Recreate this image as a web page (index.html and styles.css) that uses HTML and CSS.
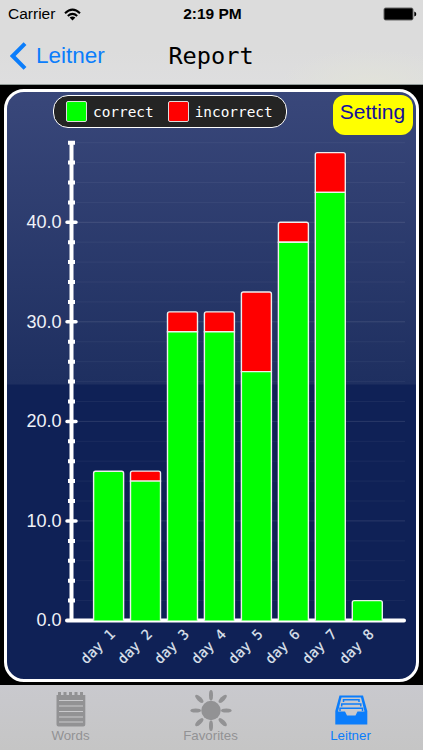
FILE: index.html
```html
<!DOCTYPE html>
<html lang="en">
	<head>
		<meta charset="utf-8" />
		<meta name="viewport" content="width=device-width, initial-scale=1" />
		<title>Report</title>
		<link rel="stylesheet" href="styles.css">
	</head>
	<body>
		<header>
			<div class="status">
				<span class="carrier">Carrier
					<svg width="17" height="13" viewBox="0 0 17 13"><g fill="none" stroke="#000" stroke-width="2"><path d="M1 5.2Q8.5-2 16 5.2" /><path d="M3.8 8Q8.5 3.8 13.2 8" /></g><path d="M5.6 9.6Q8.5 7.2 11.4 9.6L8.5 12.4Z" /></svg>
				</span>
				<span class="time">2:19 PM</span>
				<svg class="battery" width="34" height="14" viewBox="0 0 34 14"><rect x="1" y="1" width="29" height="12" rx="1.6" fill="#000" stroke="#666" stroke-width="1" /><path d="M31.3 4.5Q33.3 5 33.3 7T31.3 9.5Z" /></svg>
			</div>
			<div class="nav">
				<a class="back"><svg width="17" height="28" viewBox="0 0 17 28"><path d="M15 1.7L2.7 14L15 26.3" fill="none" stroke="#0b7dfb" stroke-width="4" /></svg>Leitner</a>
				<h1>Report</h1>
			</div>
		</header>

		<main>
			<div class="card">
				<div class="top">
					<div class="legend">
						<i class="correct"></i><span>correct</span>
						<i class="incorrect"></i><span>incorrect</span>
					</div>
					<button>Setting</button>
				</div>
				<svg class="chart" width="409" height="542" viewBox="7 136 409 542">
					<g class="grid">
						<path d="M76 142.7H405M76 162.6H405M76 182.5H405M76 202.4H405M76 242.2H405M76 262.1H405M76 282H405M76 301.9H405M76 341.8H405M76 361.7H405M76 381.6H405M76 401.5H405M76 441.3H405M76 461.2H405M76 481.1H405M76 501H405M76 540.9H405M76 560.8H405M76 580.7H405M76 600.6H405" />
						<path class="major" d="M76 222.3H405M76 321.8H405M76 421.4H405M76 520.9H405" />
					</g>
					<g class="axis">
						<path d="M71.5 143V620.5M67 620.5H404" />
						<path class="major" d="M67 222.3H76M67 321.8H76M67 421.4H76M67 520.9H76" />
						<path class="minor" d="M68 142.7H75M68 162.6H75M68 182.5H75M68 202.4H75M68 242.2H75M68 262.1H75M68 282H75M68 301.9H75M68 341.8H75M68 361.7H75M68 381.6H75M68 401.5H75M68 441.3H75M68 461.2H75M68 481.1H75M68 501H75M68 540.9H75M68 560.8H75M68 580.7H75M68 600.6H75" />
					</g>
					<g class="values">
						<text x="61.5" y="228">40.0</text>
						<text x="61.5" y="327.5">30.0</text>
						<text x="61.5" y="427">20.0</text>
						<text x="61.5" y="526.5">10.0</text>
						<text x="61.5" y="626">0.0</text>
					</g>
					<g class="bars incorrect">
						<path d="M130.5 481.1v-8q0-2 2-2h26q2 0 2 2v8z" />
						<path d="M167.5 331.8V313.9q0-2 2-2h26q2 0 2 2V331.8z" />
						<path d="M204.4 331.8V313.9q0-2 2-2h26q2 0 2 2V331.8z" />
						<path d="M241.4 371.6V294q0-2 2-2h26q2 0 2 2V371.6z" />
						<path d="M278.4 242.2V224.3q0-2 2-2h26q2 0 2 2V242.2z" />
						<path d="M315.3 192.4V154.6q0-2 2-2h26q2 0 2 2V192.4z" />
					</g>
					<g class="bars correct">
						<path d="M93.6 620.5V473.2q0-2 2-2h26q2 0 2 2V620.5" />
						<path d="M130.5 620.5V481.1h30V620.5" />
						<path d="M167.5 620.5V331.8h30V620.5" />
						<path d="M204.4 620.5V331.8h30V620.5" />
						<path d="M241.4 620.5V371.6h30V620.5" />
						<path d="M278.4 620.5V242.2h30V620.5" />
						<path d="M315.3 620.5V192.4h30V620.5" />
						<path d="M352.3 620.5V602.6q0-2 2-2h26q2 0 2 2V620.5" />
					</g>
					<g class="days">
						<text transform="translate(116 635) rotate(-45)">day 1</text>
						<text transform="translate(153 635) rotate(-45)">day 2</text>
						<text transform="translate(189.9 635) rotate(-45)">day 3</text>
						<text transform="translate(226.9 635) rotate(-45)">day 4</text>
						<text transform="translate(263.8 635) rotate(-45)">day 5</text>
						<text transform="translate(300.8 635) rotate(-45)">day 6</text>
						<text transform="translate(337.7 635) rotate(-45)">day 7</text>
						<text transform="translate(374.7 635) rotate(-45)">day 8</text>
					</g>
				</svg>
			</div>
		</main>

		<nav class="tabs">
			<a>
				<svg width="42" height="42" viewBox="0 0 42 42">
					<path fill="#929294" d="M6.5 6H8V3h3v3h2.5V3h3v3H19V3h3v3h2.5V3h3v3H30V3h3v3h2.3v29.5q0 2-2 2H8.500q-2 0-2-2z" />
					<path stroke="#c9c9cc" stroke-width="1.1" d="M9 11.500H33M9 17H33M9 22.500H33M9 28H33M9 33H33" />
				</svg>
				<span>Words</span>
			</a>
			<a>
				<svg width="42" height="42" viewBox="0 0 42 42" fill="#929294">
					<circle cx="21" cy="21.500" r="9.700" />
					<ellipse cx="21" cy="6.200" rx="2" ry="5.300" />
					<ellipse cx="21" cy="36.800" rx="2" ry="5.300" />
					<ellipse cx="5.700" cy="21.500" rx="5.300" ry="2" />
					<ellipse cx="36.300" cy="21.500" rx="5.300" ry="2" />
					<g transform="rotate(45 21 21.500)">
						<ellipse cx="21" cy="5" rx="2.200" ry="5.300" />
						<ellipse cx="21" cy="38" rx="2.200" ry="5.300" />
						<ellipse cx="4.500" cy="21.500" rx="5.300" ry="2.200" />
						<ellipse cx="37.500" cy="21.500" rx="5.300" ry="2.200" />
					</g>
				</svg>
				<span>Favorites</span>
			</a>
			<a class="active">
				<svg width="42" height="42" viewBox="0 0 42 42">
					<path fill="#0b7dfb" d="M9.500 6.500H33L37.300 22V35.500H5.300V22z" />
					<path fill="#c9c9cc" d="M11.500 8.500H31L34.500 22.500H27.500L25.500 26.500H17L15 22.500H8z" />
					<g fill="none" stroke="#0b7dfb" stroke-width="1.500">
						<path d="M13.500 13V10.800H29V13M11.700 17.500V15H30.800V17.500M10 22V19.300H32.500V22" />
					</g>
				</svg>
				<span>Leitner</span>
			</a>
		</nav>
	</body>
</html>
```

FILE: styles.css
```css
html, body { margin: 0; padding: 0; }
body { display: flex; flex-direction: column; height: 750px; background: #000; font-family: "Liberation Sans", Arial, sans-serif; }
svg { display: block; }

header { box-sizing: border-box; height: 85px; background: radial-gradient(ellipse 90px 35px at 370px 84px, #e1e2d9, transparent), linear-gradient(#dcdcdc 60%, #dededf); border-bottom: 1px solid #929b98; }
.status { display: grid; grid-template-columns: 1fr auto 1fr; align-items: center; height: 28px; padding: 0 6px 0 8px; font-size: 15.5px; }
.carrier { display: flex; align-items: center; gap: 9px; }
.time { font-weight: bold; font-size: 15.5px; }
.battery { justify-self: end; }
.nav { display: grid; grid-template-columns: 1fr auto 1fr; align-items: center; height: 56px; padding: 0 11px 0 10px; }
.back { display: flex; align-items: center; gap: 9px; color: #0b7dfb; font-size: 22.5px; }
h1 { margin: 0; font: 23.6px "DejaVu Sans Mono", monospace; }

main { box-sizing: border-box; height: 600px; padding: 4px 4px 3px; }
.card { box-sizing: border-box; height: 593px; border: 3px solid #fff; border-radius: 20px; background: linear-gradient(#39477a, #1e2f60 292px, #0f2156 293px); }
.top { display: flex; justify-content: space-between; align-items: flex-start; height: 41px; padding: 3px 3px 0 46px; }
.legend { display: flex; align-items: center; box-sizing: border-box; width: 234px; height: 33px; padding-left: 12px; border: 1.5px solid #fff; border-radius: 15px; background: #242424; color: #fff; font: 14.4px "DejaVu Sans Mono", monospace; }
.legend i { box-sizing: border-box; width: 21px; height: 21px; margin-right: 6px; border: 1px solid #ddd; border-radius: 2px; }
.legend span + i { margin-left: 14px; }
i.correct { background: #0f0; }
i.incorrect { background: #f00; }
button { width: 80px; height: 40px; padding: 0 1px 7px 0; border: 0; border-radius: 12px; background: #ff0; color: #140f9c; font: 21px "Liberation Sans", Arial, sans-serif; }

.grid path { stroke: #fff; stroke-opacity: 0.05; }
.grid .major { stroke-opacity: 0.11; }
.axis path { fill: none; stroke: #fff; stroke-width: 4; stroke-linecap: round; }
.axis .major { stroke-width: 3.5; }
.axis .minor { stroke-linecap: butt; }
.bars path { stroke: #eee; stroke-width: 1.4; }
.bars.correct { fill: #0f0; }
.bars.incorrect { fill: #f00; }
.values { fill: #f0f2f8; font-size: 18px; text-anchor: end; }
.days { fill: #dfe3ee; stroke: #dfe3ee; stroke-width: 0.2; font: 14px "DejaVu Sans Mono", monospace; text-anchor: end; }

.tabs { display: grid; grid-template-columns: repeat(3, 140px); justify-content: center; height: 65px; padding-right: 2px; background: linear-gradient(#c9c9ce, #c5c5c5); }
.tabs a { display: flex; flex-direction: column; align-items: center; padding-top: 4px; color: #929294; font-size: 13.3px; line-height: 9px; }
.tabs .active { color: #0b7dfb; }
```
